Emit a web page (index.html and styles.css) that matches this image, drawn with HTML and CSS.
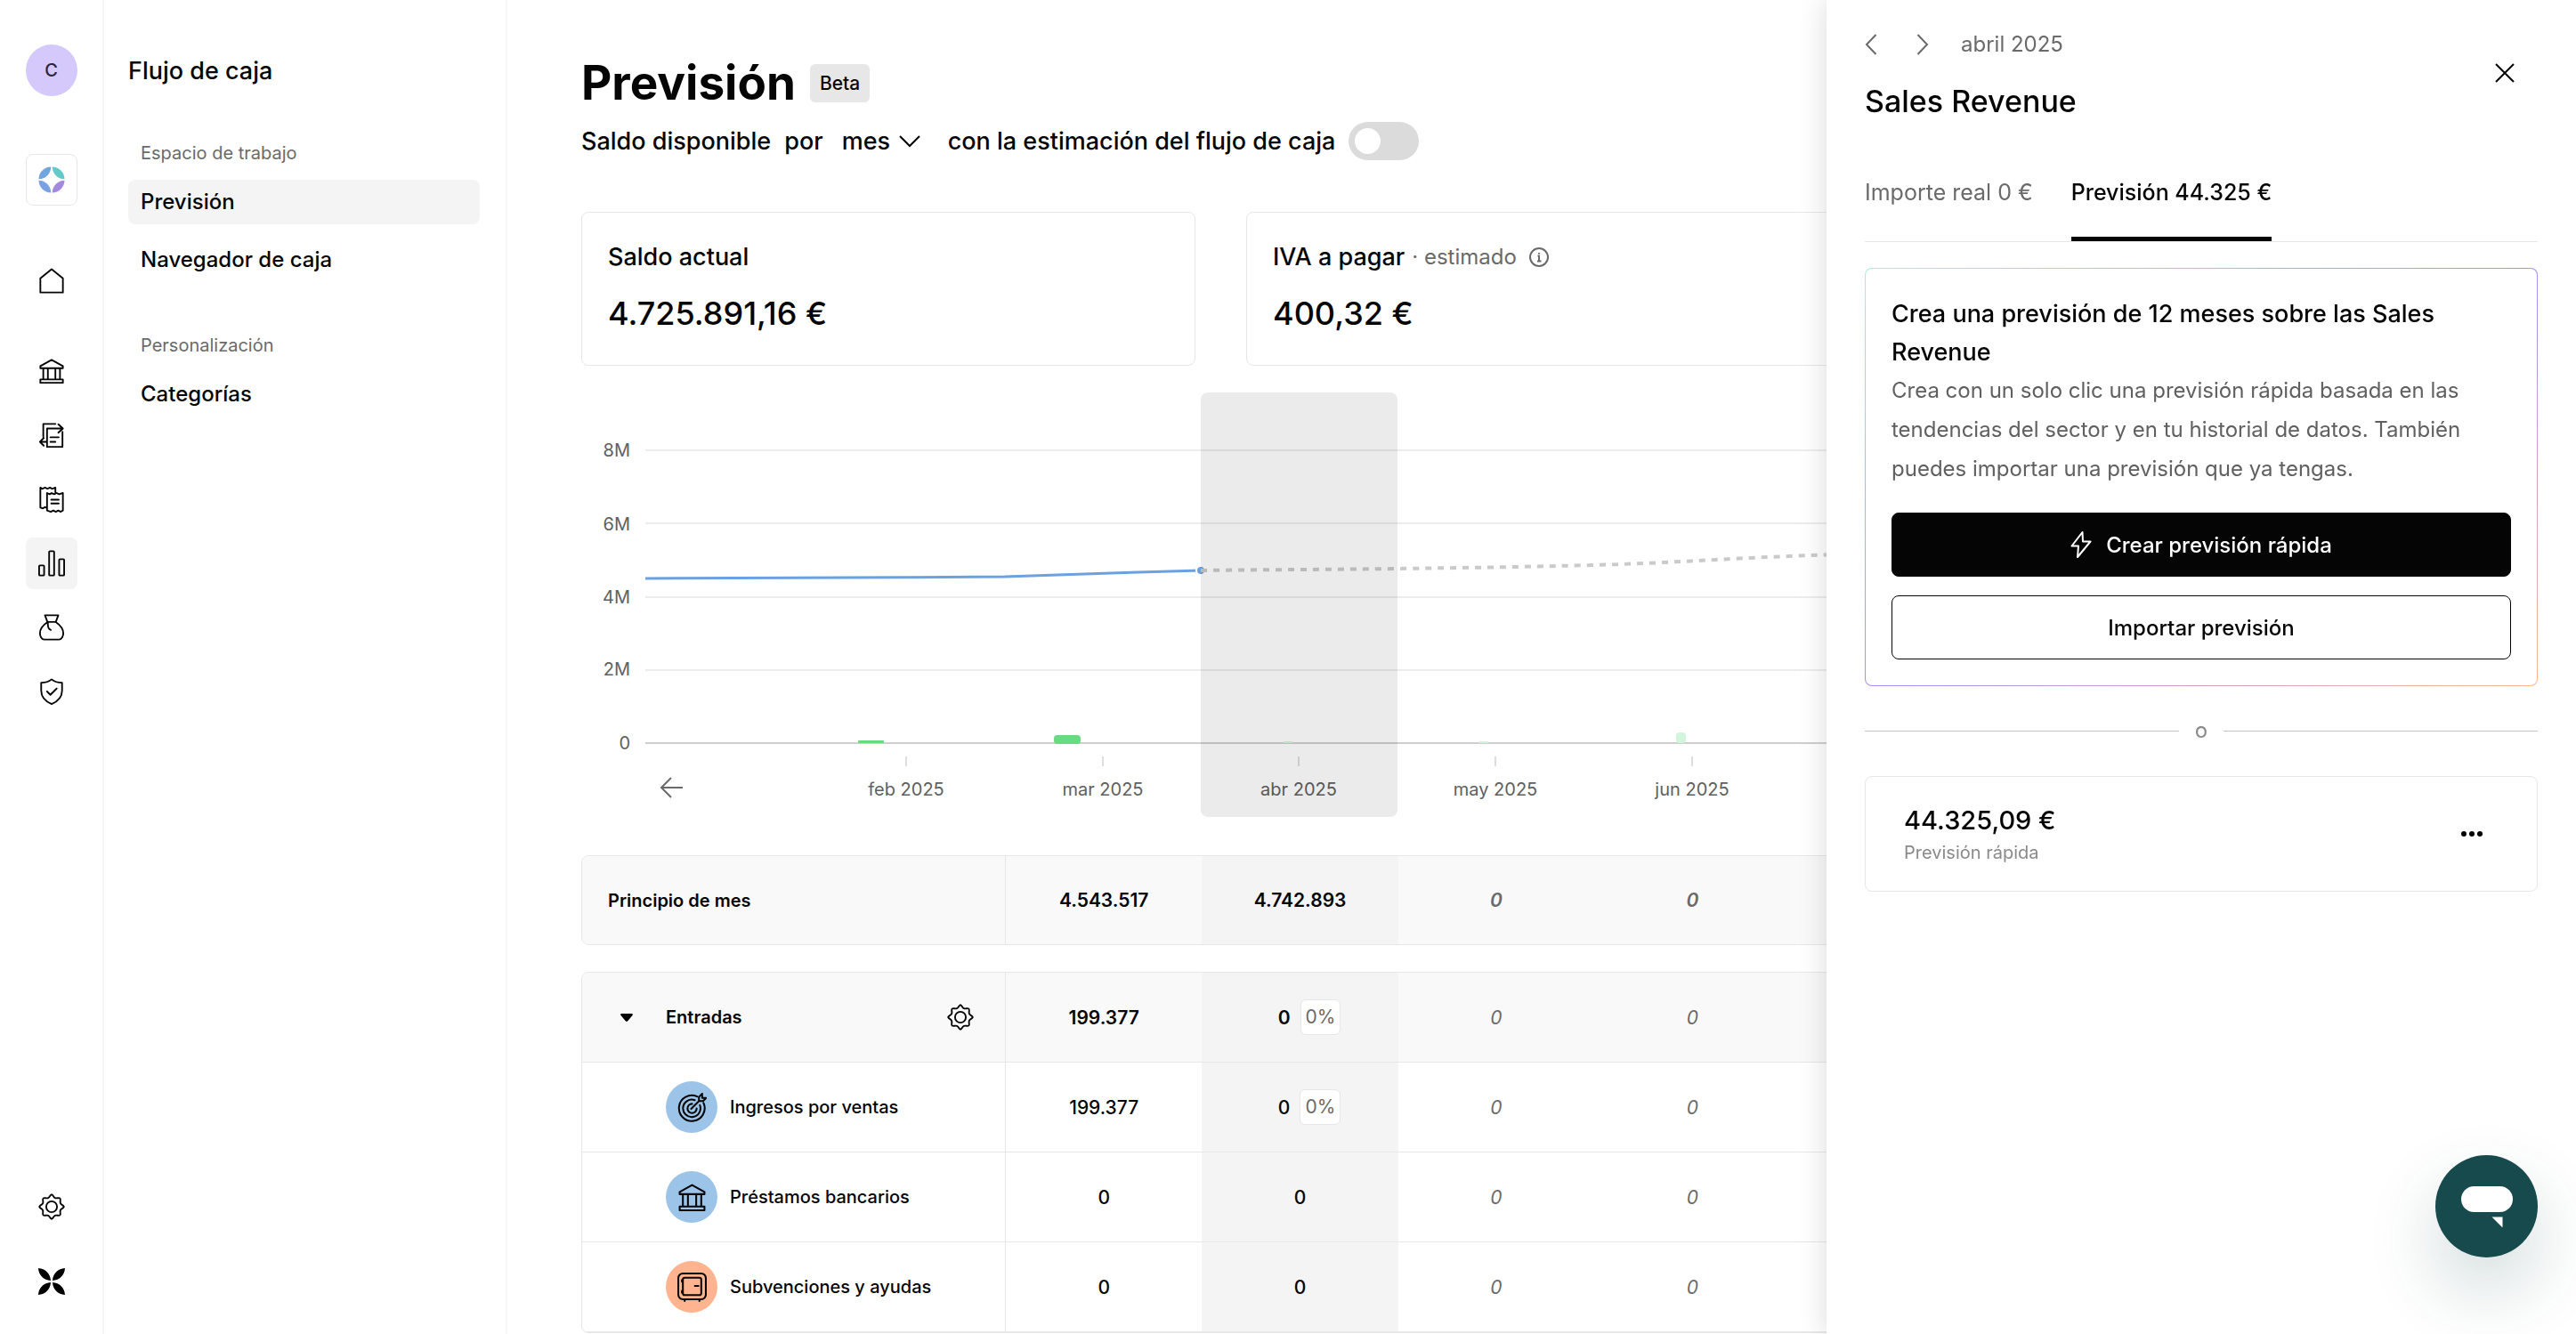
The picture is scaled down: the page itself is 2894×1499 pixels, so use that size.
FILE: index.html
```
<!DOCTYPE html>
<html lang="es">

<head>
  <meta charset="UTF-8" />
  <meta name="viewport" content="width=device-width, initial-scale=1.0" />
  <title>Previsión</title>
  <link rel="stylesheet" href="styles.css">
</head>

<body>

  <!-- Shared icons -->
  <svg class="sprite" aria-hidden="true">
    <symbol id="icon-bank" viewBox="0 0 32 32">
      <path d="M2.5 10 16 2.5 29.5 10v2.5h-27zM6 12.500v13.500M11.500 12.500v13.500M20.500 12.500v13.500M26 12.500v13.500M2.500 26h27v4h-27z" />
    </symbol>
    <symbol id="icon-gear" viewBox="0 0 32 32">
      <g id="gear-quarter">
        <path d="M16 1.500C18 1.500 17.800 4.500 20.200 5.500S24.600 4.600 26 6s-.400 3.400.6 5.800S30.500 14 30.500 16" />
      </g>
      <use href="#gear-quarter" transform="rotate(90 16 16)" />
      <use href="#gear-quarter" transform="rotate(180 16 16)" />
      <use href="#gear-quarter" transform="rotate(270 16 16)" />
      <circle cx="16" cy="16" r="6.500" />
    </symbol>
  </svg>

  <nav class="rail">
    <button class="avatar">C</button>
    <a href="#" class="company" aria-label="Empresa">
      <svg viewBox="0 0 30 30">
        <path fill="#72a4e0" d="M14.300.500A14 14 0 0 0 .500 14.300C8 14.300 14.300 8 14.300.500z" />
        <path fill="#66c9c9" d="M15.700.500A14 14 0 0 1 29.500 14.300C22 14.300 15.700 8 15.700.500z" />
        <path fill="#7aa2e2" d="M14.300 29.500A14 14 0 0 1 .500 15.700C8 15.700 14.300 22 14.300 29.500z" />
        <path fill="#a48ade" d="M15.700 29.500A14 14 0 0 0 29.500 15.700C22 15.700 15.700 22 15.700 29.500z" />
      </svg>
    </a>

    <a href="#" class="rail-link home" aria-label="Inicio">
      <svg class="icon" viewBox="0 0 32 32"><path d="M16 1.500 29.500 12.500v17h-27v-17z" /></svg>
    </a>
    <div class="rail-group">
      <a href="#" class="rail-link" aria-label="Bancos">
        <svg class="icon"><use href="#icon-bank" /></svg>
      </a>
      <a href="#" class="rail-link" aria-label="Transacciones">
        <svg class="icon" viewBox="0 0 32 32">
          <path d="M6 18V2.500h14.500M29 12v18H10.500V8h18.500M24 3 29.500 8 24 13M10.500 24H2.500M6.500 19.500 2 24l4.500 4.500M14.500 18.500h10M14.500 24h6" />
        </svg>
      </a>
      <a href="#" class="rail-link" aria-label="Facturas">
        <svg class="icon" viewBox="0 0 32 32">
          <path d="M10.500 26.500 8 25.500l-2.500 1.500-3-1V2l2.500 1.500L8 2l3 1.500L14 2l2.500 1.500L20.500 2v6M10.500 8.500l3 1.500 2.500-1.500L19 10l3-1.500L25 10l4.500-1.500v21L26.500 31 24 29.500 21 31l-3-1.500L15 31l-4.500-1.500zM15.500 16.500h9M15.500 21h9" />
        </svg>
      </a>
      <a href="#" class="rail-link active" aria-label="Flujo de caja">
        <svg class="icon" viewBox="0 0 32 32">
          <rect x="1" y="18.500" width="6" height="12" rx="1" />
          <rect x="13" y="1.500" width="6" height="29" rx="1" />
          <rect x="25" y="11" width="6" height="19.500" rx="1" />
        </svg>
      </a>
      <a href="#" class="rail-link" aria-label="Financiación">
        <svg class="icon" viewBox="0 0 32 32">
          <path d="M8 1.500h16l-3 8H11zM11 9.500C6 13 2 18 2 23c0 3.500 2 7.500 5 7.500h18c3 0 5-4 5-7.500 0-5-4-10-9-13.500M11.500 9.500v3c0 3 1 5.500 3.500 6.500" />
        </svg>
      </a>
      <a href="#" class="rail-link" aria-label="Seguros">
        <svg class="icon" viewBox="0 0 32 32">
          <path d="M16 1.500c3.500 3 8 4 12.500 4V15c0 8-5 13-12.500 16C8.500 28 3.500 23 3.500 15V5.500c4.500 0 9-1 12.500-4zM10.500 16l4 4 7.500-7.500" />
        </svg>
      </a>
    </div>
    <div class="rail-bottom">
      <a href="#" class="rail-link" aria-label="Ajustes">
        <svg class="icon"><use href="#icon-gear" /></svg>
      </a>
      <a href="#" class="brand" aria-label="Marca">
        <svg viewBox="0 0 30 30">
          <path d="M0 0c8 .500 13.500 6 14 14C6 13.500.500 8 0 0zM30 0c-8 .500-13.500 6-14 14C24 13.500 29.500 8 30 0zM0 30c8-.500 13.500-6 14-14C6 16.500.500 22 0 30zM30 30c-8-.500-13.500-6-14-14 8 .500 13.500 6 14 14z" />
        </svg>
      </a>
    </div>
  </nav>

  <aside class="sidebar">
    <h2 class="sidebar-title">Flujo de caja</h2>
    <section class="sidebar-section">
      <h3>Espacio de trabajo</h3>
      <a href="#" class="active">Previsión</a>
      <a href="#">Navegador de caja</a>
    </section>
    <section class="sidebar-section">
      <h3>Personalización</h3>
      <a href="#">Categorías</a>
    </section>
  </aside>

  <main class="content">
    <header class="page-header">
      <h1>Previsión</h1>
      <span class="badge">Beta</span>
    </header>

    <div class="filters">
      <span>Saldo disponible</span>
      <label for="period">por</label>
      <div class="period">
        <select id="period">
          <option>mes</option>
          <option>semana</option>
        </select>
        <svg class="chevron" viewBox="0 0 24 14"><path d="M1 1l11 11L23 1" /></svg>
      </div>
      <label for="estimate">con la estimación del flujo de caja</label>
      <input type="checkbox" id="estimate" class="toggle">
    </div>

    <div class="cards">
      <div class="card">
        <h2>Saldo actual</h2>
        <p>4.725.891,16 €</p>
      </div>
      <div class="card">
        <h2>IVA a pagar <span class="note">· estimado</span>
          <svg class="info" viewBox="0 0 22 22"><circle cx="11" cy="11" r="10" /><path d="M9.500 9.500H11v6M9 15.500h4.500M11 6v1.500" /></svg>
        </h2>
        <p>400,32 €</p>
      </div>
      <div class="card"></div>
    </div>

    <svg class="chart" viewBox="0 0 2241 477">
      <g class="grid-lines">
        <path d="M72 65H2241M72 147H2241M72 230H2241M72 312H2241" />
        <path class="axis" d="M72 394H2241" />
      </g>
      <g class="bar">
        <rect x="311" y="391" width="29" height="3" rx="1" />
        <rect x="531" y="385" width="30" height="10" rx="4" />
      </g>
      <g class="bar bar-forecast">
        <rect x="789" y="392" width="10" height="2" />
        <rect x="1009" y="392" width="10" height="2" />
        <rect x="1230" y="382" width="11" height="12" rx="4" />
      </g>
      <path class="line" d="M72 209C200 209 340 208 476 207C560 204 620 202 696 200" />
      <circle class="line-end" cx="696" cy="200" r="5" />
      <path class="line-forecast" d="M696 200C770 199 840 199 916 198S1060 196 1137 194S1280 187 1357 184L1577 175" />
      <path class="ticks" d="M365 409v11M586 409v11M806 409v11M1027 409v11M1248 409v11" />
      <g class="y-labels">
        <text x="55" y="72">8M</text>
        <text x="55" y="155">6M</text>
        <text x="55" y="237">4M</text>
        <text x="55" y="318">2M</text>
        <text x="55" y="401">0</text>
      </g>
      <g class="x-labels">
        <text x="365" y="453">feb 2025</text>
        <text x="586" y="453">mar 2025</text>
        <text x="806" y="453">abr 2025</text>
        <text x="1027" y="453">may 2025</text>
        <text x="1248" y="453">jun 2025</text>
      </g>
      <path class="back" d="M101 433 90 444l11 11M90 444h24" />
      <rect class="current-month" x="696" width="221" height="477" rx="8" />
    </svg>

    <table class="flow">
      <tbody>
        <tr class="total">
          <th scope="row">Principio de mes</th>
          <td>4.543.517</td>
          <td class="current">4.742.893</td>
          <td class="future">0</td>
          <td class="future">0</td>
          <td></td><td></td><td></td><td></td>
        </tr>
      </tbody>
    </table>

    <table class="flow">
      <tbody>
        <tr class="total">
          <th scope="row">
            <div class="group">
              <button class="collapse" aria-label="Contraer">
                <svg viewBox="0 0 14 9"><path d="M1 0h12q1.500.500.500 2L8 8.500q-1 .800-2 0L.500 2Q-.500.500 1 0z" /></svg>
              </button>
              <span>Entradas</span>
              <button class="settings" aria-label="Configurar entradas">
                <svg class="icon"><use href="#icon-gear" /></svg>
              </button>
            </div>
          </th>
          <td>199.377</td>
          <td class="current"><div class="progress">0 <span class="percent">0%</span></div></td>
          <td class="future">0</td>
          <td class="future">0</td>
          <td></td><td></td><td></td><td></td>
        </tr>
        <tr>
          <th scope="row">
            <div class="category">
              <span class="category-icon blue">
                <svg class="icon" viewBox="0 0 32 32">
                  <path d="M21.500 4A14 14 0 1 0 28.500 11M19 8a9.500 9.500 0 1 0 5.500 5.500M16 12a5 5 0 1 0 5 5M15 17.500 23.500 9V4.500L27 1v4.500h4.500L28 9h-4.500" />
                </svg>
              </span>
              Ingresos por ventas
            </div>
          </th>
          <td>199.377</td>
          <td class="current"><div class="progress">0 <span class="percent">0%</span></div></td>
          <td class="future">0</td>
          <td class="future">0</td>
          <td></td><td></td><td></td><td></td>
        </tr>
        <tr>
          <th scope="row">
            <div class="category">
              <span class="category-icon blue">
                <svg class="icon"><use href="#icon-bank" /></svg>
              </span>
              Préstamos bancarios
            </div>
          </th>
          <td>0</td>
          <td class="current">0</td>
          <td class="future">0</td>
          <td class="future">0</td>
          <td></td><td></td><td></td><td></td>
        </tr>
        <tr>
          <th scope="row">
            <div class="category">
              <span class="category-icon orange">
                <svg class="icon" viewBox="0 0 32 32">
                  <rect x="1" y="1" width="30" height="28" rx="5" />
                  <rect x="6" y="5.500" width="20" height="19" rx="2" />
                  <path d="M19 14.500h4M5 8v2M5 20v2M8 29.500v1.500M24 29.500v1.500" />
                </svg>
              </span>
              Subvenciones y ayudas
            </div>
          </th>
          <td>0</td>
          <td class="current">0</td>
          <td class="future">0</td>
          <td class="future">0</td>
          <td></td><td></td><td></td><td></td>
        </tr>
      </tbody>
    </table>
  </main>

  <!-- Detail drawer -->
  <aside class="drawer">
    <div class="drawer-header">
      <div>
        <div class="month-nav">
          <button aria-label="Mes anterior"><svg viewBox="0 0 14 24"><path d="M12.500 1 2 12l10.500 11" /></svg></button>
          <button aria-label="Mes siguiente"><svg viewBox="0 0 14 24"><path d="M1.500 1 12 12 1.500 23" /></svg></button>
          <span>abril 2025</span>
        </div>
        <h2>Sales Revenue</h2>
      </div>
      <button class="close" aria-label="Cerrar"><svg viewBox="0 0 22 22"><path d="M1 1l20 20M21 1 1 21" /></svg></button>
    </div>

    <div class="tabs">
      <button>Importe real 0 €</button>
      <button class="active">Previsión 44.325 €</button>
    </div>

    <section class="promo">
      <h3>Crea una previsión de 12 meses sobre las Sales Revenue</h3>
      <p>Crea con un solo clic una previsión rápida basada en las tendencias del sector y en tu historial de datos. También puedes importar una previsión que ya tengas.</p>
      <button class="btn btn-primary">
        <svg viewBox="0 0 24 30"><path d="M13.500 1 1.500 16.500H9L8 29 22.500 11.500H14z" /></svg>
        Crear previsión rápida
      </button>
      <button class="btn">Importar previsión</button>
    </section>

    <div class="divider">o</div>

    <section class="forecast">
      <div>
        <p class="amount">44.325,09 €</p>
        <p class="kind">Previsión rápida</p>
      </div>
      <button class="more" aria-label="Más opciones">
        <svg viewBox="0 0 24 6"><circle cx="3" cy="3" r="3" /><circle cx="12" cy="3" r="3" /><circle cx="21" cy="3" r="3" /></svg>
      </button>
    </section>
  </aside>

  <button class="chat" aria-label="Abrir chat">
    <svg viewBox="0 0 58 46"><rect width="58" height="29" rx="14.500" /><path d="M34.500 34.500H46.500v12z" /></svg>
  </button>

</body>

</html>
```
FILE: styles.css
```
* {
  margin: 0;
  padding: 0;
  box-sizing: border-box;
}

body {
  display: flex;
  height: 100vh;
  overflow: hidden;
  font-family: Inter, "Liberation Sans", sans-serif;
  font-size: 24px;
  font-weight: 450;
  color: #050505;
  background: #fff;
}

h1, h2, h3 {
  font-weight: 450;
}

a {
  color: inherit;
  text-decoration: none;
}

button {
  font: inherit;
  color: inherit;
  background: none;
  border: none;
  cursor: pointer;
}

svg {
  display: block;
  flex: none;
}

.sprite {
  position: absolute;
  width: 0;
  height: 0;
}

.icon {
  width: 30px;
  height: 30px;
  fill: none;
  stroke: currentColor;
  stroke-width: 2;
  stroke-linecap: round;
  stroke-linejoin: round;
}

/* Icon rail */
.rail {
  flex: none;
  display: flex;
  flex-direction: column;
  align-items: center;
  width: 117px;
  padding: 50px 0 30px;
  border-right: 2px solid #f7f7f7;
}

.avatar {
  width: 58px;
  height: 58px;
  border-radius: 50%;
  background: #d5c8fb;
  color: #2b2440;
  font-size: 20px;
}

.company {
  display: grid;
  place-items: center;
  width: 58px;
  height: 58px;
  margin-top: 65px;
  border: 1px solid #e7e7e7;
  border-radius: 8px;
}

.company svg,
.brand svg {
  width: 30px;
  height: 30px;
}

.rail-link,
.brand {
  display: grid;
  place-items: center;
  width: 58px;
  height: 58px;
  border-radius: 8px;
}

.rail-link.active {
  background: #f4f4f4;
}

.home {
  margin-top: 56px;
}

.rail-group {
  display: grid;
  gap: 14px;
  margin-top: 43px;
}

.rail-bottom {
  display: grid;
  gap: 26px;
  margin-top: auto;
}

/* Section menu */
.sidebar {
  flex: none;
  width: 453px;
  padding: 59px 29px 0 27px;
  border-right: 2px solid #f7f7f7;
}

.sidebar-title {
  font-size: 27px;
  line-height: 42px;
}

.sidebar-section {
  display: grid;
  gap: 15px;
  margin-top: 56px;
}

.sidebar-section h3 {
  padding: 0 14px;
  font-size: 20px;
  font-weight: 400;
  line-height: 30px;
  color: #6a6a6a;
}

.sidebar-section a {
  padding: 0 14px;
  line-height: 50px;
  border-radius: 8px;
}

.sidebar-section a.active {
  background: #f4f4f4;
}

/* Main page */
.content {
  flex: 1;
  min-width: 0;
  padding: 61px 0 0 83px;
  overflow: hidden;
}

.page-header {
  display: flex;
  align-items: center;
  gap: 16px;
}

.page-header h1 {
  font-size: 53px;
  font-weight: 700;
  line-height: 64px;
}

.badge {
  padding: 0 11px;
  font-size: 21px;
  line-height: 43px;
  border-radius: 6px;
  background: #e7e7e7;
}

.filters {
  display: flex;
  align-items: center;
  gap: 15px;
  margin-top: 12px;
  font-size: 27px;
}

.period {
  display: grid;
  align-items: center;
  margin: 0 16px 0 6px;
}

.period select,
.period .chevron {
  grid-area: 1 / 1;
}

.period select {
  appearance: none;
  width: 88px;
  font: inherit;
  color: inherit;
  border: none;
  background: none;
}

.chevron {
  justify-self: end;
  width: 24px;
  height: 14px;
  fill: none;
  stroke: #050505;
  stroke-width: 2;
  pointer-events: none;
}

.toggle {
  appearance: none;
  display: flex;
  align-items: center;
  width: 79px;
  height: 43px;
  padding: 0 7px;
  border-radius: 22px;
  background: #dbdbdb;
  cursor: pointer;
}

.toggle::before {
  content: "";
  width: 29px;
  height: 29px;
  border-radius: 50%;
  background: #fff;
}

.toggle:checked {
  justify-content: flex-end;
  background: #050505;
}

.cards {
  display: grid;
  grid-template-columns: repeat(3, 1fr);
  gap: 57px;
  margin-top: 58px;
  padding-right: 57px;
}

.card {
  padding: 30px 29px 36px;
  border: 1px solid #e7e7e7;
  border-radius: 8px;
}

.card h2 {
  display: flex;
  align-items: center;
  gap: 8px;
  font-size: 27px;
  line-height: 40px;
}

.card p {
  margin-top: 21px;
  font-size: 36px;
  line-height: 44px;
}

.note {
  font-size: 24px;
  font-weight: 400;
  color: #6a6a6a;
}

.info {
  width: 22px;
  height: 22px;
  margin-left: 6px;
  fill: none;
  stroke: #6a6a6a;
  stroke-width: 2;
}

/* Chart */
.chart {
  width: 100%;
  height: auto;
  margin-top: 30px;
  font-size: 20px;
  font-weight: 400;
}

.grid-lines {
  fill: none;
  stroke: #ececec;
  stroke-width: 2;
}

.grid-lines .axis {
  stroke: #cfcfcf;
}

.bar {
  fill: #67db7f;
}

.bar-forecast {
  fill: #d3f5db;
}

.line,
.line-forecast,
.ticks,
.back {
  fill: none;
}

.line {
  stroke: #6ba1e0;
  stroke-width: 3;
}

.line-end {
  fill: #6ba1e0;
  stroke: #fff;
  stroke-width: 2;
}

.line-forecast {
  stroke: #cacaca;
  stroke-width: 4;
  stroke-dasharray: 7 7;
}

.ticks {
  stroke: #dedede;
  stroke-width: 2;
}

.y-labels,
.x-labels {
  fill: #606060;
}

.y-labels {
  text-anchor: end;
}

.x-labels {
  text-anchor: middle;
}

.back {
  stroke: #6a6a6a;
  stroke-width: 2;
}

.current-month {
  fill: #000;
  fill-opacity: 0.08;
}

/* Cash flow tables */
.flow {
  width: 100%;
  margin-top: 43px;
  table-layout: fixed;
  border-collapse: separate;
  border-spacing: 0;
  border: 1px solid #e7e7e7;
  border-radius: 8px;
  overflow: hidden;
  font-size: 21px;
  text-align: center;
}

.flow + .flow {
  margin-top: 30px;
}

.flow th {
  width: 476px;
  padding: 0 29px;
  font-size: 20px;
  font-weight: 450;
  text-align: left;
  border-right: 1px solid #e7e7e7;
}

.flow th,
.flow td {
  height: 101px;
  border-bottom: 1px solid #e7e7e7;
}

.flow tr:only-child th,
.flow tr:only-child td {
  height: 99px;
  border-bottom: none;
}

.flow .current {
  background: #f4f4f4;
}

.flow .future {
  font-style: italic;
  font-weight: 400;
  color: #6a6a6a;
}

.flow tr:only-child .future {
  font-weight: 600;
}

.total {
  font-weight: 600;
  background: #f9f9f9;
}

.flow .total th {
  font-weight: 600;
}

.group,
.category,
.progress {
  display: flex;
  align-items: center;
}

.group {
  padding: 0 6px 0 14px;
}

.collapse {
  width: 14px;
  margin-right: 37px;
}

.settings {
  margin-left: auto;
}

.category {
  gap: 14px;
  padding-left: 65px;
}

.category-icon {
  display: grid;
  place-items: center;
  width: 58px;
  height: 58px;
  border-radius: 50%;
}

.category-icon .icon {
  width: 33px;
  height: 33px;
}

.blue {
  background: #9bc4e8;
}

.orange {
  background: #ffb38e;
}

.progress {
  justify-content: center;
  gap: 11px;
  padding-left: 21px;
}

.percent {
  padding: 0 5px;
  font-weight: 400;
  line-height: 38px;
  color: #6a6a6a;
  border: 1px solid #e7e7e7;
  border-radius: 6px;
  background: #fff;
}

/* Drawer */
.drawer {
  position: fixed;
  top: 0;
  right: 0;
  bottom: 0;
  width: 842px;
  max-width: 100%;
  padding: 32px 43px;
  background: #fff;
  box-shadow: 0 0 30px rgba(0, 0, 0, 0.15);
}

.drawer-header {
  display: flex;
  align-items: flex-start;
  justify-content: space-between;
}

.month-nav {
  display: flex;
  align-items: center;
  gap: 44px;
  font-weight: 400;
  line-height: 36px;
  color: #6a6a6a;
}

.month-nav span {
  margin-left: -8px;
}

.month-nav svg {
  width: 14px;
  height: 24px;
}

.month-nav svg,
.close svg {
  fill: none;
  stroke: currentColor;
  stroke-width: 2;
}

.drawer-header h2 {
  margin-top: 24px;
  font-size: 34px;
  line-height: 44px;
}

.close {
  height: 100px;
  padding: 0 26px;
}

.close svg {
  width: 22px;
  height: 22px;
}

.tabs {
  display: flex;
  gap: 43px;
  margin-top: 58px;
  border-bottom: 1px solid #e7e7e7;
}

.tabs button {
  height: 77px;
  padding-bottom: 28px;
  font-size: 25px;
  font-weight: 400;
  line-height: 44px;
  color: #6a6a6a;
  border-bottom: 5px solid transparent;
}

.tabs button.active {
  font-weight: 450;
  color: #050505;
  border-bottom-color: #050505;
}

.promo {
  margin-top: 29px;
  padding: 29px;
  border: 1px solid transparent;
  border-radius: 8px;
  background:
    linear-gradient(#fff, #fff) padding-box,
    linear-gradient(to bottom right, #a8f0d8, #a58cff 50%, #ffb38e) border-box;
}

.promo h3 {
  font-size: 27px;
  line-height: 43px;
}

.promo p {
  margin-bottom: 27px;
  font-weight: 400;
  line-height: 44px;
  color: #606060;
}

.btn {
  display: flex;
  align-items: center;
  justify-content: center;
  gap: 16px;
  width: 100%;
  height: 72px;
  border: 1px solid #050505;
  border-radius: 8px;
}

.btn svg {
  width: 24px;
  height: 30px;
  fill: none;
  stroke: currentColor;
  stroke-width: 2;
  stroke-linejoin: round;
}

.btn-primary {
  margin-bottom: 21px;
  color: #fff;
  background: #050505;
}

.divider {
  display: flex;
  align-items: center;
  gap: 18px;
  margin-top: 32px;
  line-height: 36px;
  font-weight: 400;
  color: #8a8a8a;
}

.divider::before,
.divider::after {
  content: "";
  flex: 1;
  border-top: 1px solid #c4c4c4;
}

.forecast {
  display: flex;
  align-items: center;
  justify-content: space-between;
  margin-top: 33px;
  padding: 28px 61px 28px 43px;
  border: 1px solid #e7e7e7;
  border-radius: 8px;
}

.amount {
  font-size: 29px;
  line-height: 42px;
}

.kind {
  font-size: 20px;
  font-weight: 400;
  line-height: 30px;
  color: #8a8a8a;
}

.more svg {
  width: 24px;
  height: 6px;
}

/* Chat launcher */
.chat {
  position: fixed;
  right: 43px;
  bottom: 86px;
  display: grid;
  place-items: center;
  width: 115px;
  height: 115px;
  border-radius: 50%;
  background: #174a4d;
  box-shadow: 0 36px 80px rgba(23, 74, 77, 0.2);
}

.chat svg {
  width: 58px;
  height: 46px;
  fill: #fff;
}
```
